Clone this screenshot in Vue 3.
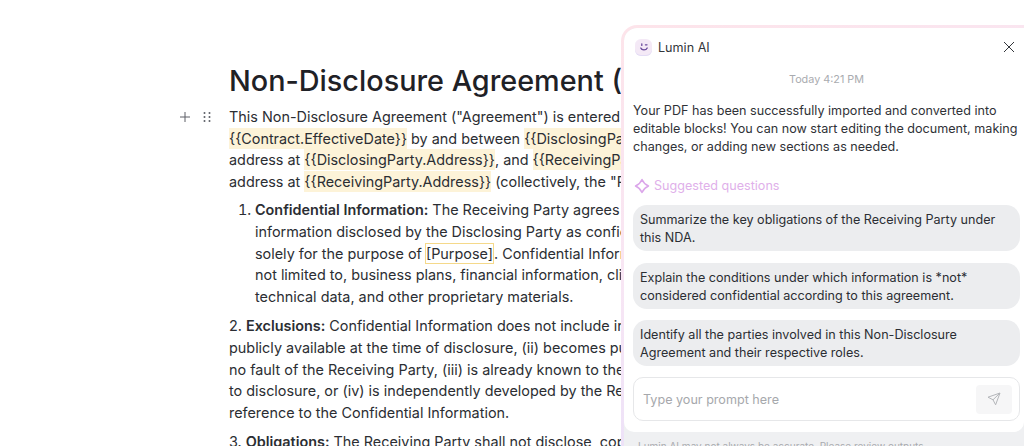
<template>
  <div class="page">
    <main class="doc">
      <h1>Non-Disclosure Agreement (NDA)</h1>

      <div class="block">
        <div class="handles">
          <svg width="12" height="12" viewBox="0 0 12 12"><path d="M6 1v10M1 6h10" stroke="#5c5f66" stroke-width="1" fill="none" /></svg>
          <svg width="8" height="12" viewBox="0 0 8 12" fill="#5c5f66">
            <circle v-for="d in dots" :key="d.x + '-' + d.y" :cx="d.x" :cy="d.y" r="1" />
          </svg>
        </div>
        <p>
          This Non-Disclosure Agreement ("Agreement") is entered into as of<br>
          <mark>{{ '\{\{Contract.EffectiveDate\}\}' }}</mark> by and between <mark>{{ '\{\{DisclosingParty.Name\}\}' }}</mark>, with an<br>
          address at <mark>{{ '\{\{DisclosingParty.Address\}\}' }}</mark>, and <mark>{{ '\{\{ReceivingParty.Name\}\}' }}</mark>, with an<br>
          address at <mark>{{ '\{\{ReceivingParty.Address\}\}' }}</mark> (collectively, the "Parties").
        </p>
      </div>

      <ol>
        <li>
          <b>Confidential Information:</b> The Receiving Party agrees to keep all<br>
          information disclosed by the Disclosing Party as confidential and use it<br>
          solely for the purpose of <span class="field">[Purpose]</span>. Confidential Information includes, but is<br>
          not limited to, business plans, financial information, client lists,<br>
          technical data, and other proprietary materials.
        </li>
      </ol>

      <p class="para">
        2. <b>Exclusions:</b> Confidential Information does not include information that (i) is<br>
        publicly available at the time of disclosure, (ii) becomes publicly available through<br>
        no fault of the Receiving Party, (iii) is already known to the Receiving Party prior<br>
        to disclosure, or (iv) is independently developed by the Receiving Party without<br>
        reference to the Confidential Information.
      </p>

      <p class="para">
        3. <b>Obligations:</b> The Receiving Party shall not disclose, copy, or distribute
      </p>
    </main>

    <aside class="panel">
      <div class="panel-inner">
        <div class="card">
          <header>
            <span class="logo">
              <svg width="12" height="12" viewBox="0 0 12 12" fill="none">
                <path d="M3.800 2.800v1.600M7.400 3.800h1.600" stroke="#6a4a9c" stroke-width="1.300" stroke-linecap="round" />
                <path d="M2.800 7c.8 2.600 5.400 2.600 6.400 0" stroke="#6a4a9c" stroke-width="1.300" stroke-linecap="round" />
              </svg>
            </span>
            <span class="title">Lumin AI</span>
            <svg class="close" width="12" height="12" viewBox="0 0 12 12"><path d="M1 1l10 10M11 1L1 11" stroke="#33363b" stroke-width="1" fill="none" /></svg>
          </header>

          <div class="time">Today 4:21 PM</div>

          <p class="message">
            Your PDF has been successfully imported and converted into editable blocks! You can now start editing the document, making changes, or adding new sections as needed.
          </p>

          <div class="suggest">
            <svg width="16" height="16" viewBox="0 0 16 16" fill="none">
              <path d="M8 1.500C9.300 4.500 11.500 6.700 14.500 8 11.500 9.300 9.300 11.500 8 14.500 6.700 11.500 4.500 9.300 1.500 8 4.500 6.700 6.700 4.500 8 1.500Z" stroke="#dba6ea" stroke-width="1.500" stroke-linejoin="round" />
            </svg>
            <span>Suggested questions</span>
          </div>

          <div class="questions">
            <div v-for="q in questions" :key="q" class="question">{{ q }}</div>
          </div>

          <div class="prompt">
            <span class="placeholder">Type your prompt here</span>
            <span class="send">
              <svg width="14" height="14" viewBox="0 0 14 14" fill="none">
                <path d="M13 1L1 5.200l5 2.600 2.600 5L13 1ZM6 7.800L13 1" stroke="#b4b6ba" stroke-width="1" stroke-linejoin="round" />
              </svg>
            </span>
          </div>
        </div>
        <footer>Lumin AI may not always be accurate. Please review outputs.</footer>
      </div>
    </aside>
  </div>
</template>

<script setup>
const dots = [
  { x: 1.5, y: 2 }, { x: 6.5, y: 2 },
  { x: 1.5, y: 6 }, { x: 6.5, y: 6 },
  { x: 1.5, y: 10 }, { x: 6.5, y: 10 }
]

const questions = [
  'Summarize the key obligations of the Receiving Party under this NDA.',
  'Explain the conditions under which information is *not* considered confidential according to this agreement.',
  'Identify all the parties involved in this Non-Disclosure Agreement and their respective roles.'
]
</script>

<style scoped>
.page {
  position: relative;
  width: 1024px;
  height: 446px;
  overflow: hidden;
  background: #fff;
  font-family: Inter, "Noto Sans", sans-serif;
  color: #2b2e33;
}

.doc {
  padding: 61px 0 0 229px;
  font-size: 14.4px;
  line-height: 21.6px;
  white-space: nowrap;
}

h1 {
  margin: 0 0 5px;
  font-size: 28.8px;
  line-height: 40px;
  font-weight: 500;
  color: #1f2126;
}

.block {
  position: relative;
}

.handles {
  position: absolute;
  left: -50px;
  top: 5px;
  display: flex;
  align-items: center;
  gap: 12px;
}

.handles svg {
  display: block;
}

p {
  margin: 0;
}

mark {
  padding: 2px 0;
  background: #fdf3d8;
  color: inherit;
}

ol {
  margin: 7px 0 0;
  padding: 0 0 0 26px;
}

b {
  font-weight: 600;
}

.field {
  margin-left: -1px;
  padding: 1px 0;
  border: 1px solid #f5d98a;
}

.para {
  margin-top: 8px;
}

.panel {
  position: absolute;
  left: 621px;
  top: 25px;
  right: 0;
  bottom: 0;
  padding: 3px 0 0 3px;
  border-radius: 16px 0 0 0;
  background: linear-gradient(160deg, #fde4ea 0%, #f8e6f4 45%, #e4defb 100%);
}

.panel-inner {
  height: 100%;
  border-radius: 13px 0 0 0;
  background: #eff0f2;
  overflow: hidden;
}

.card {
  height: 404px;
  padding: 0 4px 0 9px;
  box-sizing: border-box;
  border-radius: 13px 0 10px 10px;
  background: #fff;
  font-size: 12.6px;
  line-height: 18px;
}

header {
  display: flex;
  align-items: center;
  height: 38px;
  padding-left: 2px;
}

.logo {
  display: flex;
  align-items: center;
  justify-content: center;
  width: 17px;
  height: 17px;
  border-radius: 6px;
  background: #f4e9f6;
  box-shadow: inset 0 -1px 0 #e3dcf5;
}

.title {
  margin-left: 6px;
  padding-top: 1px;
  color: #33363b;
}

.close {
  margin-left: auto;
  margin-right: 5px;
}

.time {
  margin-top: 5px;
  text-align: center;
  font-size: 10.8px;
  color: #a9abaf;
}

.message {
  margin-top: 13px;
  color: #2f3237;
}

.suggest {
  display: flex;
  align-items: center;
  gap: 4px;
  margin-top: 21px;
  padding-left: 1px;
  color: #e0b0ea;
}

.questions {
  display: flex;
  flex-direction: column;
  gap: 11.500px;
  margin-top: 10px;
}

.question {
  padding: 6px 7px 4px;
  border-radius: 14px;
  background: #ecedef;
  color: #2b2e33;
}

.prompt {
  display: flex;
  align-items: center;
  justify-content: space-between;
  height: 44px;
  margin-top: 11px;
  padding: 0 7px 0 9px;
  box-sizing: border-box;
  border: 1px solid #e6e7e9;
  border-radius: 10px;
}

.placeholder {
  padding-top: 2px;
  color: #a6a8ac;
}

.send {
  display: flex;
  align-items: center;
  justify-content: center;
  width: 36px;
  height: 29px;
  border-radius: 4px;
  background: #f6f6f7;
}

footer {
  padding: 7px 0 0 14px;
  font-size: 10px;
  line-height: 14px;
  color: #a9abaf;
}
</style>
